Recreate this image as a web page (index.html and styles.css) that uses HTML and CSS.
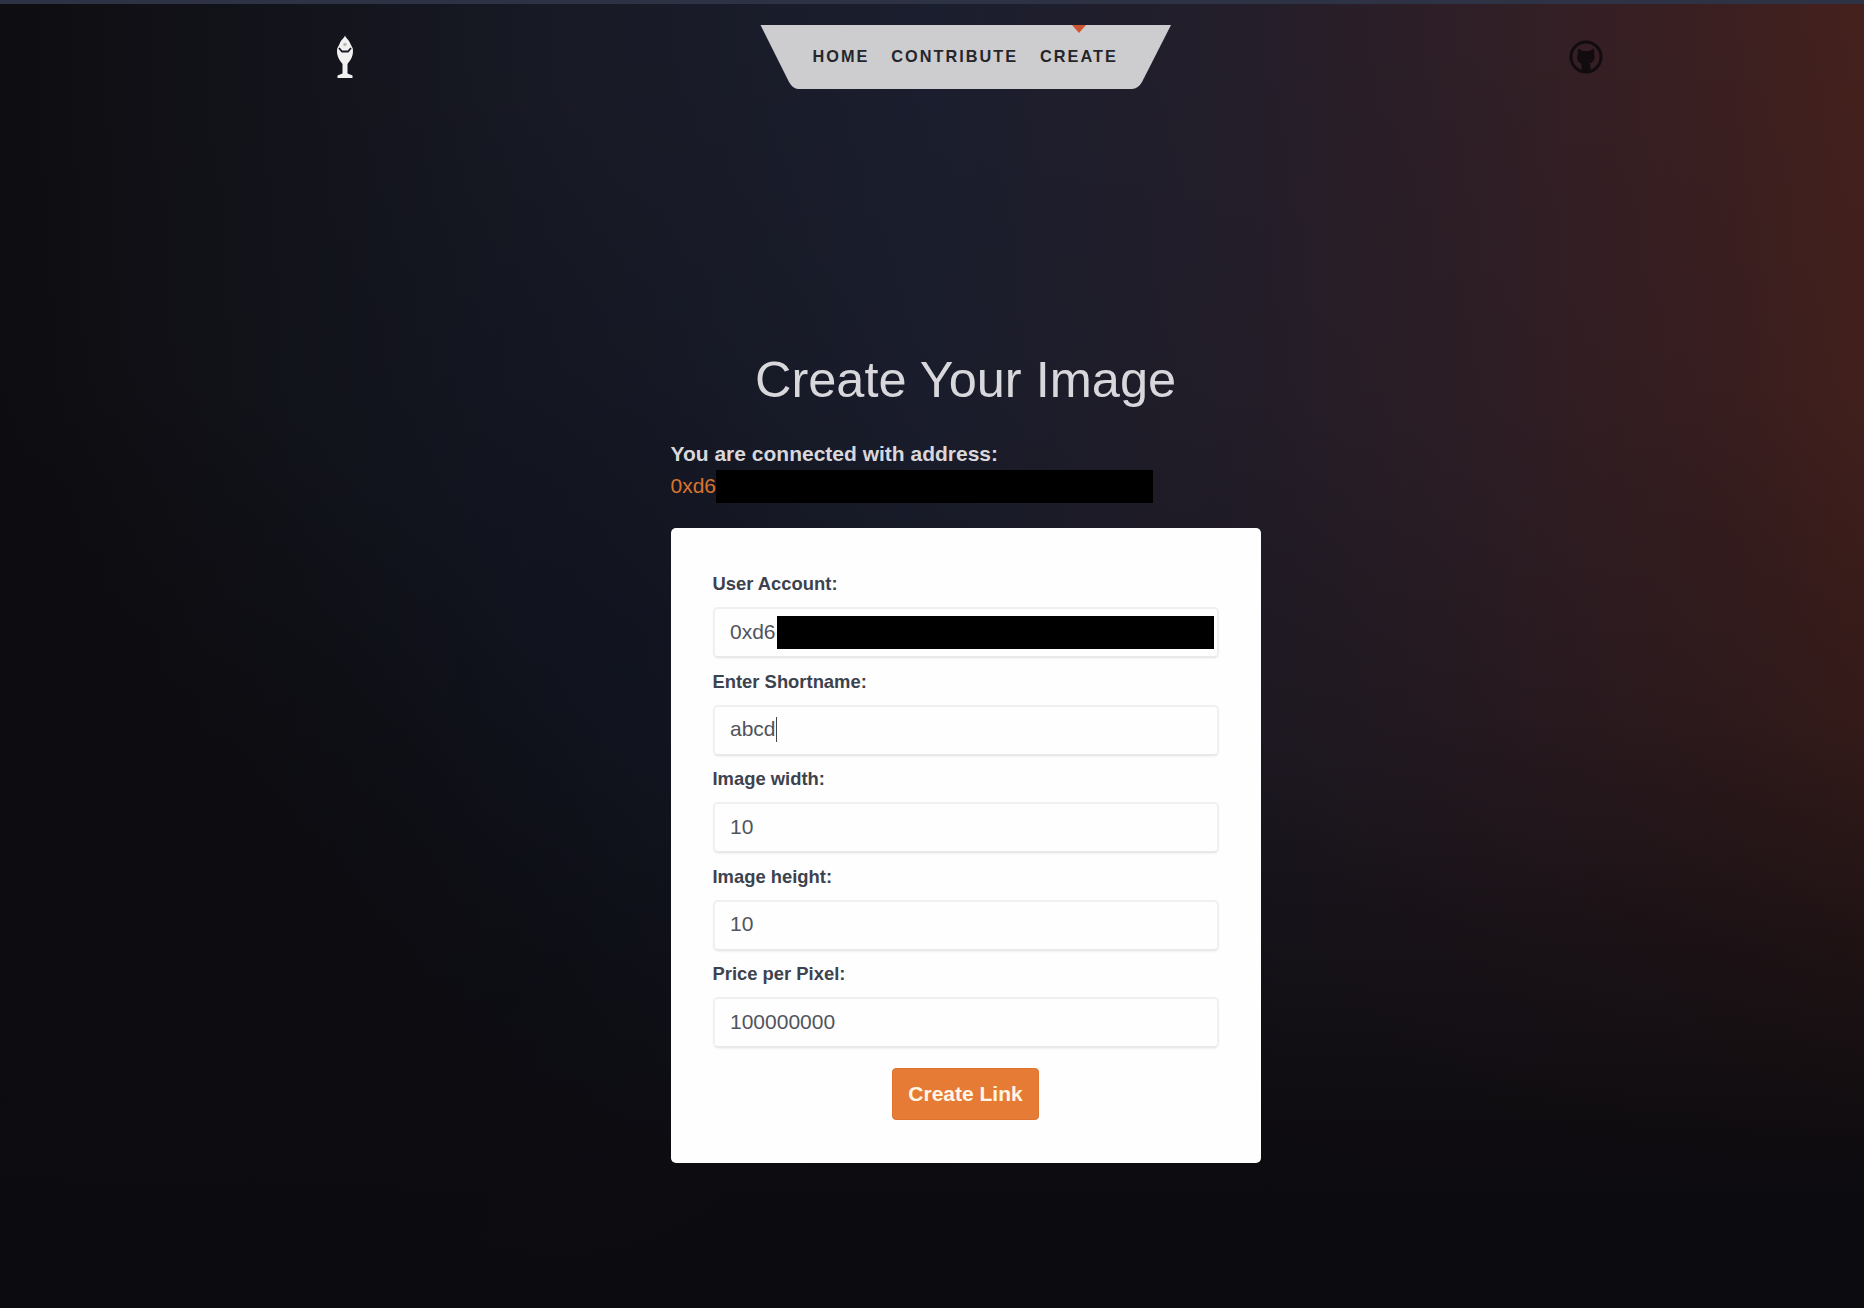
FILE: index.html
```html
<!DOCTYPE html>
<html lang="en">
<head>
<meta charset="utf-8">
<title>Create Your Image</title>
<link rel="stylesheet" href="styles.css">
</head>
<body>
<header class="header">
  <a class="logo" aria-label="Logo">
    <svg width="20" height="44" viewBox="0 0 20 44">
      <path fill="#f1f1f1" d="M10 .5c1 3 4 4 5.500 8.500l2.300 4.500c1 7-1.800 11-5.300 15.500v9.500l5 2v2.500h-15v-2.500l5-2V29C4 24.500 1.200 20.500 2.200 13.500L4.500 9c1.500-4.500 4.500-5.500 5.500-8.500z"/>
      <path fill="none" stroke="#191a25" stroke-width="1.800" d="M4 13l3 3.500h6l3-3.500"/>
      <circle cx="10" cy="9.500" r="1.800" fill="#b8b8bc"/>
    </svg>
  </a>
  <nav class="nav">
    <svg class="nav-shape" width="412" height="65" viewBox="0 0 412 65">
      <path fill="#cdcdd0" d="M.5 0H411L382 57Q378 64 372 64H38Q33 64 29 57Z"/>
    </svg>
    <a class="nav-link">HOME</a>
    <a class="nav-link">CONTRIBUTE</a>
    <a class="nav-link active">CREATE</a>
  </nav>
  <a class="github" aria-label="GitHub">
    <svg width="36" height="36" viewBox="0 0 36 36">
      <circle cx="18" cy="18" r="15" fill="none" stroke="#120c11" stroke-width="3"/>
      <path fill="#120c11" d="M10.500 9.500l4 2.500h7l4-2.500c1 2 1 4 .5 5 2 5-.5 9-4.500 10 .8 1 1 2 1 3.500v4.500h-9V24.500c-4-1-5.500-5-3.500-10-.5-1-.5-3 .5-5z"/>
    </svg>
  </a>
</header>
<main class="main">
  <h1 class="title">Create Your Image</h1>
  <section class="account">
    <p class="account-label">You are connected with address:</p>
    <p class="address">0xd6<span class="redacted"></span></p>
  </section>
  <form class="card">
    <label class="label">User Account:</label>
    <div class="field">0xd6<span class="redacted field-redacted"></span></div>
    <label class="label">Enter Shortname:</label>
    <div class="field">abcd<span class="caret"></span></div>
    <label class="label">Image width:</label>
    <div class="field">10</div>
    <label class="label">Image height:</label>
    <div class="field">10</div>
    <label class="label">Price per Pixel:</label>
    <div class="field">100000000</div>
    <button class="button" type="button">Create Link</button>
  </form>
</main>
</body>
</html>
```
FILE: styles.css
```css
* { box-sizing: border-box; }
body {
  margin: 0;
  height: 1308px;
  overflow: hidden;
  border-top: 4px solid #2d3344;
  font-family: "Liberation Sans", Arial, sans-serif;
  background:
    radial-gradient(ellipse 750px 750px at 0 1100px, rgba(12, 11, 15, .95), rgba(12, 11, 15, .7) 50%, rgba(12, 11, 15, 0)),
    radial-gradient(ellipse 420px 620px at 560px 720px, rgba(12, 18, 30, .5), rgba(12, 18, 30, 0)),
    linear-gradient(rgba(12, 11, 15, 0), rgba(12, 11, 15, .08) 30%, rgba(12, 11, 15, .3) 55%, rgba(12, 11, 15, .72) 75%, #0c0b0f 91%),
    linear-gradient(90deg, #0e0d11, #12131a 14%, #181a26 32%, #1b1e2e 50%, #241e2a 67%, #321f26 82%, #3c1f20 93%, #45211d);
}
.header {
  display: flex;
  justify-content: space-between;
  margin: 0 auto;
  padding: 21px 260px 0 335px;
  height: 86px;
}
.logo { padding-top: 10px; }
.github { padding-top: 14px; }
.nav {
  position: relative;
  display: flex;
  gap: 22px;
  width: 413px;
  height: 65px;
  padding-left: 53px;
  margin-left: 9px;
}
.nav-shape { position: absolute; left: 0; top: 0; }
.nav-link {
  position: relative;
  font-size: 16.300px;
  font-weight: 700;
  letter-spacing: 2px;
  line-height: 62px;
  color: #25262b;
}
.active::before {
  content: "";
  position: absolute;
  top: 0;
  left: 50%;
  margin-left: -7px;
  border: 7.500px solid transparent;
  border-top: 8px solid #cf5430;
  border-bottom: 0;
}
.main { width: 590px; margin: 0 0 0 670.500px; }
.title {
  margin: 0;
  padding-top: 256px;
  font-size: 50.500px;
  line-height: 68px;
  font-weight: 400;
  text-align: center;
  color: #d8d7dc;
}
.account { padding-top: 24px; font-size: 21px; line-height: 32px; }
.account-label { margin: 0; font-weight: 700; color: #d8d7dc; }
.address { display: flex; margin: 0; color: #d9742f; height: 34px; }
.redacted { width: 437px; height: 33px; background: #000; }
.card {
  display: flex;
  flex-direction: column;
  height: 635px;
  margin-top: 24px;
  padding: 42px;
  border-radius: 5px;
  background: #fefefe;
}
.label {
  height: 37px;
  line-height: 28px;
  font-size: 18.400px;
  font-weight: 700;
  color: #3c424e;
}
.field {
  display: flex;
  align-items: center;
  width: 506px;
  height: 51px;
  margin-bottom: 9.500px;
  padding: 0 0 2px 15.500px;
  border: 2px solid #f0f0f1;
  border-bottom-color: #e9e9ea;
  border-radius: 5px;
  box-shadow: 0 1px 2px rgba(0, 0, 0, .05);
  font-size: 21px;
  color: #50545d;
}
.field-redacted { flex: none; margin: 1px 0 0 1px; }
.caret { width: 1.500px; height: 25px; background: #44474f; }
.button {
  align-self: center;
  width: 147px;
  height: 52px;
  margin-top: 10.500px;
  padding: 0 0 1px;
  border: 1px solid #dc7431;
  border-radius: 4px;
  background: #e67b35;
  color: #fff6e8;
  font: 700 21px "Liberation Sans", Arial, sans-serif;
}
```
